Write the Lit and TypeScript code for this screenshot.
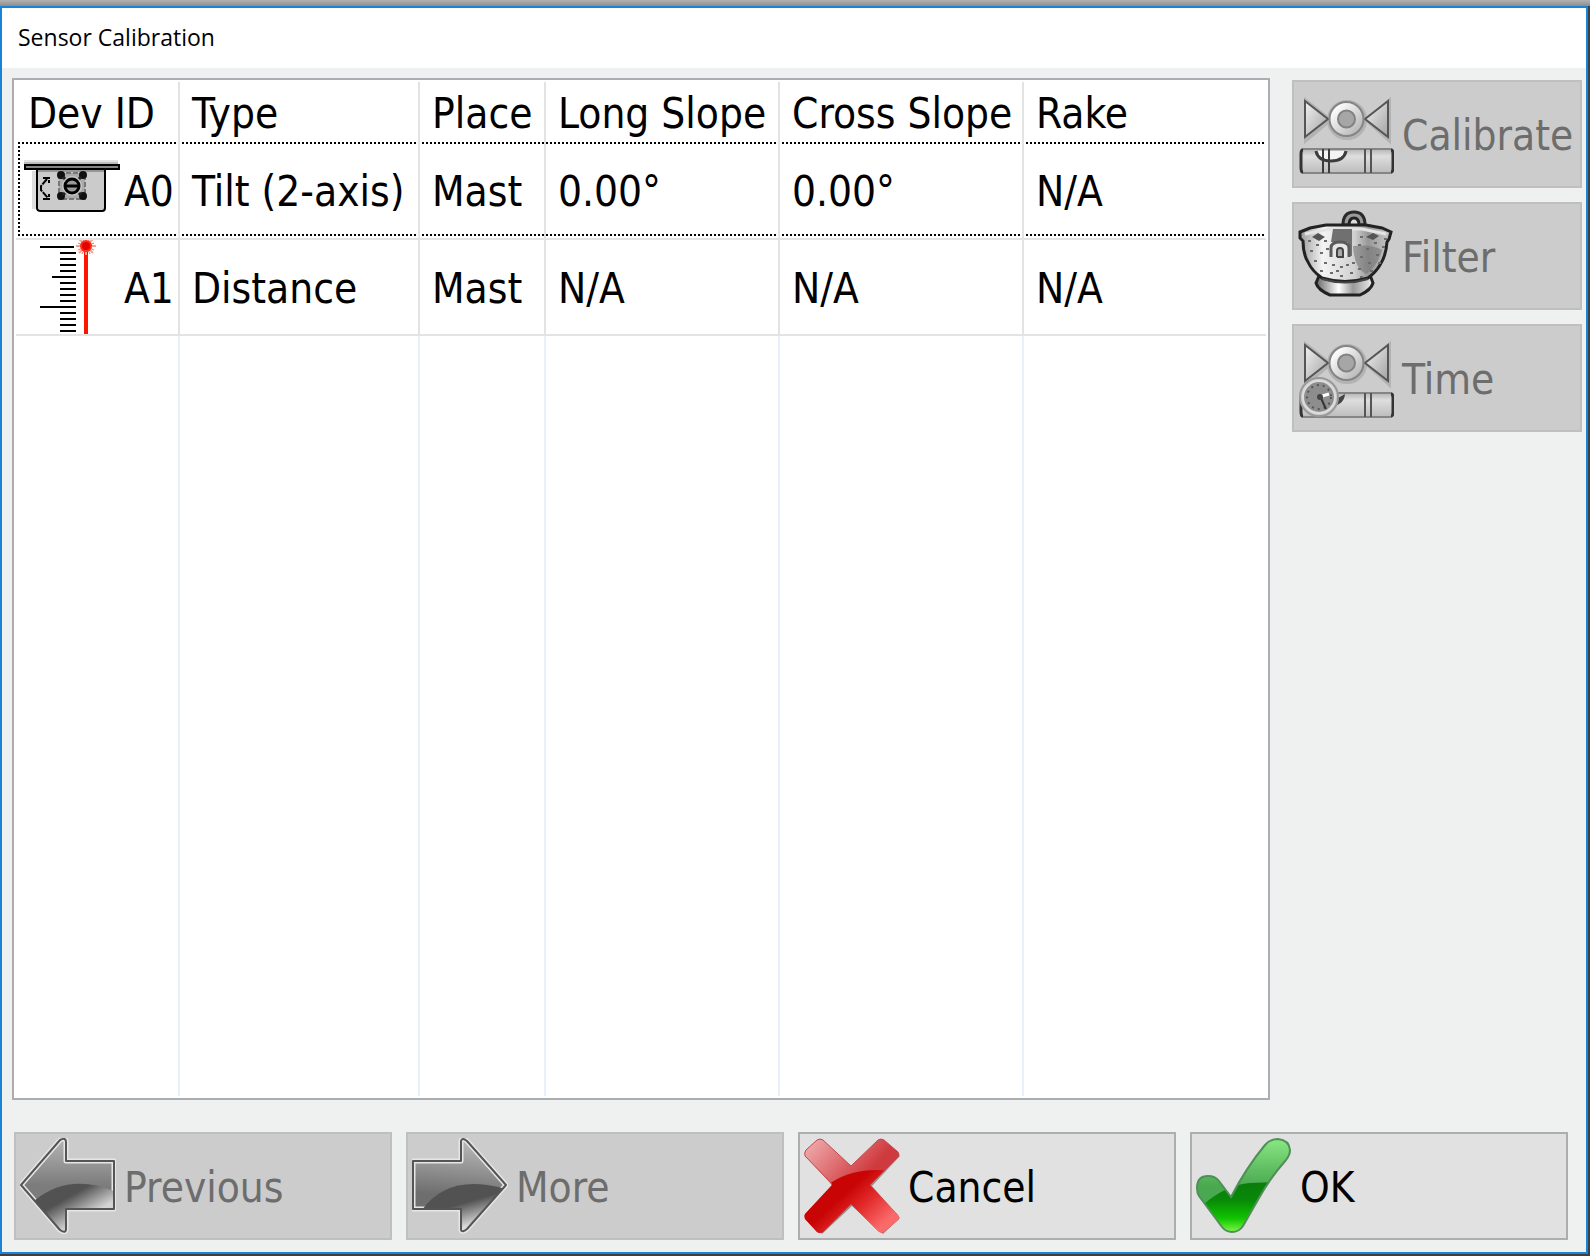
import { LitElement, html, svg, css, nothing } from "lit";
import type { TemplateResult } from "lit";
import { customElement, property } from "lit/decorators.js";

interface Sensor {
  icon: string;
  id: string;
  cells: string[];
  focused?: boolean;
}

const COLUMNS = ["Dev ID", "Type", "Place", "Long Slope", "Cross Slope", "Rake"];

const SENSORS: Sensor[] = [
  { icon: "tilt", id: "A0", cells: ["Tilt (2-axis)", "Mast", "0.00°", "0.00°", "N/A"], focused: true },
  { icon: "distance", id: "A1", cells: ["Distance", "Mast", "N/A", "N/A", "N/A"] },
];

const ACTIONS = [
  { icon: "calibrate", label: "Calibrate", disabled: true },
  { icon: "filter", label: "Filter", disabled: true },
  { icon: "time", label: "Time", disabled: true },
];

const COMMANDS = [
  { icon: "previous", label: "Previous", disabled: true },
  { icon: "more", label: "More", disabled: true },
  { icon: "cancel", label: "Cancel", disabled: false },
  { icon: "ok", label: "OK", disabled: false },
];

// Black scale ticks: [left edge, top edge]; every tick ends at x = 52.
const TICKS: [number, number][] = [
  [16, 6], [36, 12], [36, 18], [36, 24], [36, 30], [28, 36], [36, 42], [36, 48],
  [36, 54], [36, 60], [16, 66], [36, 72], [36, 78], [36, 84], [36, 90],
];

const valve = svg`
  <defs>
    <linearGradient id="tri" x1="0" y1="0" x2="1" y2="1">
      <stop offset="0" stop-color="#f2f2f2"/><stop offset="1" stop-color="#a2a2a2"/>
    </linearGradient>
    <linearGradient id="ring" x1="0" y1="0" x2="1" y2="1">
      <stop offset="0.15" stop-color="#ffffff"/><stop offset="0.9" stop-color="#b4b4b4"/>
    </linearGradient>
    <linearGradient id="tube" x1="0" y1="0" x2="0" y2="1">
      <stop offset="0" stop-color="#b5b5b5"/><stop offset="0.3" stop-color="#dedede"/><stop offset="1" stop-color="#bcbcbc"/>
    </linearGradient>
  </defs>
  <g fill="none" stroke="#9c9c9c" stroke-width="4" opacity="0.5">
    <path d="M8 15V54L32 34Z"/><path d="M91 15V54L69 34Z"/><circle cx="49" cy="34" r="18"/>
  </g>
  <path d="M7 15V51L30 33Z" fill="url(#tri)" stroke="#555" stroke-width="2"/>
  <path d="M90 15V51L67 33Z" fill="url(#tri)" stroke="#555" stroke-width="2"/>
  <circle cx="48.500" cy="33" r="17" fill="url(#ring)" stroke="#858585" stroke-width="2"/>
  <circle cx="48.500" cy="33" r="8.500" fill="#a6a6a6" stroke="#828282" stroke-width="2"/>
  <rect x="3" y="63" width="92" height="24" rx="3" fill="url(#tube)" stroke="#858585" stroke-width="2"/>
  <path d="M5 64Q3 64 3 68V82Q3 86 5 86M93 64Q95 64 95 68V82Q95 86 93 86" fill="none" stroke="#333" stroke-width="3"/>
  <path d="M67 63V87M73 63V87" stroke="#555" stroke-width="2"/>`;

// Scattered perforations of the colander.
const HOLES: [number, number][] = [
  [10, 32], [18, 36], [26, 32], [12, 42], [22, 44], [16, 52], [26, 54], [34, 56], [22, 62], [32, 64],
  [42, 58], [42, 67], [52, 64], [54, 54], [60, 60], [62, 48], [70, 54], [68, 40], [78, 46], [76, 34],
  [84, 38], [60, 36], [62, 68], [72, 62], [86, 30], [62, 28], [80, 54], [28, 40], [38, 62], [48, 56],
];

const ICONS: Record<string, TemplateResult> = {
  tilt: svg`
    <rect x="0" y="18" width="94" height="2" fill="#e2e2e2"/>
    <rect x="0" y="20" width="94" height="2" fill="#bdbdbd"/>
    <rect x="8" y="29" width="4" height="38" fill="#dedede"/>
    <path d="M13 27V66Q13 69 17 69H78Q81 69 81 66V27Z" fill="#cbcbcb" stroke="#000" stroke-width="2"/>
    <rect x="14" y="28" width="66" height="2" fill="#969696"/>
    <rect x="1" y="23" width="94" height="4" fill="#858585" stroke="#000" stroke-width="2"/>
    <path d="M23 37L17 44V48L24 56M19 36H25V41M19 57H25V52" fill="none" stroke="#000" stroke-width="2" stroke-dasharray="7 1"/>
    <rect x="35" y="31" width="26" height="26" fill="#aaa" stroke="#777" stroke-width="2" stroke-dasharray="5 2"/>
    <g fill="#111"><circle cx="37" cy="33" r="4"/><circle cx="59" cy="33" r="4"/><circle cx="37" cy="54" r="4"/><circle cx="59" cy="54" r="4"/></g>
    <path d="M39 35L42 38M57 35L54 38M39 53L42 50M57 53L54 50" stroke="#222" stroke-width="3"/>
    <circle cx="48" cy="44" r="10" fill="#c6c6c6"/>
    <circle cx="48" cy="44" r="7" fill="#999" stroke="#000" stroke-width="3"/>
    <path d="M42 44H54" stroke="#000" stroke-width="3"/>`,
  distance: svg`
    ${TICKS.map(([x, y]) => svg`<rect x=${x} y=${y} width=${(y === 6 ? 50 : 52) - x} height="2" fill="#000"/>`)}
    <rect x="60" y="8" width="4" height="86" fill="#ff1400"/>
    <path d="M62 -3V15M52 6H72M55 -1L69 13M69 -1L55 13" stroke="#f8a48c" stroke-width="2"/>
    <path d="M58 -2L66 14M66 -2L58 14M54 3L70 10M70 3L54 10" stroke="#f4765a" stroke-width="1"/>
    <circle cx="62" cy="6" r="6" fill="#f5301c"/>
    <circle cx="62" cy="6" r="4" fill="#e60000"/>`,
  calibrate: svg`
    ${valve}
    <path d="M18 65Q20 75 33 75Q46 75 48 65Z" fill="#f4f4f4"/>
    <path d="M18 65Q20 75 33 75Q46 75 48 65" fill="none" stroke="#3c3c3c" stroke-width="3"/>
    <path d="M25 63V87M31 63V87" stroke="#3c3c3c" stroke-width="2"/>`,
  time: svg`
    ${valve}
    <path d="M34 76Q46 75 47 64L40 68Z" fill="#444"/>
    <circle cx="21" cy="67" r="19" fill="#cfcfcf" stroke="#999" stroke-width="2"/>
    <circle cx="21" cy="67" r="16" fill="#8d8d8d" stroke="#ddd" stroke-width="2"/>
    <circle cx="21" cy="67" r="12" fill="none" stroke="#555" stroke-width="2" stroke-dasharray="2 4"/>
    <path d="M21 67L31 64" stroke="#fff" stroke-width="3"/>
    <path d="M22 66L28 79" stroke="#333" stroke-width="2"/>
    <circle cx="22" cy="67" r="3" fill="#444"/>`,
  filter: svg`
    <defs>
      <linearGradient id="bowl" x1="0" y1="0" x2="1" y2="0">
        <stop offset="0" stop-color="#9a9a9a"/><stop offset="0.25" stop-color="#f4f4f4"/>
        <stop offset="0.6" stop-color="#d0d0d0"/><stop offset="0.75" stop-color="#979797"/><stop offset="1" stop-color="#cccccc"/>
      </linearGradient>
      <linearGradient id="foot" x1="0" y1="0" x2="1" y2="0">
        <stop offset="0" stop-color="#666"/><stop offset="0.4" stop-color="#fff"/><stop offset="0.65" stop-color="#999"/><stop offset="1" stop-color="#eee"/>
      </linearGradient>
    </defs>
    <path d="M45 17Q45 4 56 4Q67 4 67 17Z" fill="#9a9a9a" stroke="#2a2a2a" stroke-width="3"/>
    <path d="M51 17Q51 10 56 10Q61 10 61 17" fill="#ddd" stroke="#222" stroke-width="3"/>
    <path d="M21 68L18 75Q20 82 32 87H62Q73 82 75 75L72 67Z" fill="url(#foot)" stroke="#222" stroke-width="3"/>
    <path d="M2 24L12 20L28 17H68L84 20L93 24L91 31L89 34Q88 48 82 57Q78 64 70 70Q47 77 24 70Q14 63 10 54Q5 46 5 33L2 30Z" fill="url(#bowl)" stroke="#222" stroke-width="3"/>
    <path d="M7 26L32 21H64L88 26" fill="none" stroke="#e4e4e4" stroke-width="3"/>
    <path d="M14 29L20 25L27 29L21 33ZM68 29L75 25L81 28L75 32Z" fill="#555"/>
    <path d="M55 38Q74 36 84 42Q80 58 68 66Q56 60 55 38Z" fill="#777" opacity="0.6"/>
    <path d="M35 21H54V48H50V34H33Z" fill="#707070"/>
    <g fill="#6c6c6c">${HOLES.map(([x, y]) => svg`<rect x=${x} y=${y} width="3" height="2"/>`)}</g>
    <path d="M33 49V40Q33 34 42 34Q51 34 51 40V49" fill="#e6e6e6" stroke="#5a5a5a" stroke-width="3"/>
    <path d="M39 49V43Q39 40 42 40Q45 40 45 43V49H39" fill="#aaa" stroke="#444" stroke-width="2"/>
    <path d="M24 71Q47 78 70 71" fill="none" stroke="#444" stroke-width="2"/>`,
  previous: svg`
    <defs>
      <linearGradient id="pa" x1="0" y1="0" x2="0" y2="1">
        <stop offset="0" stop-color="#b4b4b4"/><stop offset="0.5" stop-color="#7c7c7c"/>
      </linearGradient>
      <linearGradient id="pb" gradientUnits="userSpaceOnUse" x1="40" y1="50" x2="60" y2="85">
        <stop offset="0.3" stop-color="#525252"/><stop offset="0.95" stop-color="#d4d4d4"/>
      </linearGradient>
      <clipPath id="pc"><path d="M1 47L40 2Q46 -1 46 4V23H94V71H46V91Q46 96 40 92Z"/></clipPath>
    </defs>
    <path d="M1 47L40 2Q46 -1 46 4V23H94V71H46V91Q46 96 40 92Z" fill="url(#pa)" stroke="#e6e6e6" stroke-width="5" stroke-linejoin="round"/>
    <path d="M15 62Q50 34 96 54V96H15Z" fill="url(#pb)" clip-path="url(#pc)"/>
    <path d="M1 47L40 2Q46 -1 46 4V23H94V71H46V91Q46 96 40 92Z" fill="none" stroke="#555" stroke-width="2" stroke-linejoin="round"/>`,
  more: svg`
    <defs>
      <linearGradient id="ma" x1="0.300" y1="0" x2="0.200" y2="1">
        <stop offset="0" stop-color="#b8b8b8"/><stop offset="0.6" stop-color="#6e6e6e"/>
      </linearGradient>
      <linearGradient id="mb" gradientUnits="userSpaceOnUse" x1="40" y1="50" x2="52" y2="92">
        <stop offset="0.4" stop-color="#525252"/><stop offset="0.95" stop-color="#dddddd"/>
      </linearGradient>
      <clipPath id="mc"><path d="M1 23H49V3Q50 -1 55 3L94 47L55 91Q50 95 49 92V71H1Z"/></clipPath>
    </defs>
    <path d="M1 23H49V3Q50 -1 55 3L94 47L55 91Q50 95 49 92V71H1Z" fill="url(#ma)" stroke="#e6e6e6" stroke-width="5" stroke-linejoin="round"/>
    <path d="M10 72Q36 36 90 50V96H10Z" fill="url(#mb)" clip-path="url(#mc)"/>
    <path d="M1 23H49V3Q50 -1 55 3L94 47L55 91Q50 95 49 92V71H1Z" fill="none" stroke="#555" stroke-width="2" stroke-linejoin="round"/>`,
  cancel: svg`
    <defs>
      <linearGradient id="xa" x1="0" y1="0" x2="0.550" y2="0.500">
        <stop offset="0" stop-color="#f3b4b6"/><stop offset="1" stop-color="#cf3a3e"/>
      </linearGradient>
      <linearGradient id="xb" x1="0.200" y1="0.400" x2="0.900" y2="0.900">
        <stop offset="0.200" stop-color="#c80404"/><stop offset="0.5" stop-color="#e22a2a"/><stop offset="0.9" stop-color="#fb6a6a"/>
      </linearGradient>
      <clipPath id="xc"><path d="M2 12L13 2Q16 0 19 2L47 28L74 2Q77 0 80 2L94 14Q96 17 94 19L66 47L94 77Q96 80 94 82L80 94Q77 96 74 93L47 66L19 94Q16 96 13 94L1 81Q0 78 1 76L28 47L1 18Q0 15 2 12Z"/></clipPath>
    </defs>
    <path d="M4 14L14 4L47 31L78 4L96 18L68 48L96 80L79 96L48 68L18 96L4 81L30 48Z" fill="#8f8f8f"/>
    <g clip-path="url(#xc)">
      <rect width="96" height="96" fill="url(#xa)"/>
      <path d="M-2 70L28 44Q48 31 77 32L96 34V96H-2Z" fill="url(#xb)"/>
    </g>
    <path d="M28 46L1 18Q0 15 2 12L13 2Q16 0 19 2L47 28L74 2Q77 0 80 2L94 14Q96 17 94 19L77 36" fill="none" stroke="#c24850" stroke-width="1"/>`,
  ok: svg`
    <defs>
      <linearGradient id="ka" x1="0" y1="0" x2="0" y2="1">
        <stop offset="0" stop-color="#8ae884"/><stop offset="0.5" stop-color="#4aa850"/>
      </linearGradient>
      <linearGradient id="kb" x1="0" y1="0" x2="0" y2="1">
        <stop offset="0" stop-color="#0a7c0a"/><stop offset="0.35" stop-color="#088a08"/><stop offset="0.7" stop-color="#10c400"/><stop offset="1" stop-color="#8dff50"/>
      </linearGradient>
      <clipPath id="kc"><path d="M1 50Q1 38 12 38Q19 38 23 43L35 59Q50 30 69 7Q74 1 82 1Q93 2 94 12Q94 17 90 22Q74 40 63 60L47 88Q43 94 36 94Q30 94 26 89L3 58Q1 55 1 50Z"/></clipPath>
    </defs>
    <g clip-path="url(#kc)">
      <rect width="96" height="96" fill="url(#ka)"/>
      <path d="M8 66Q30 47 54 45L80 44V96H8Z" fill="url(#kb)"/>
    </g>
    <path d="M1 50Q1 38 12 38Q19 38 23 43L35 59Q50 30 69 7Q74 1 82 1Q93 2 94 12Q94 17 90 22Q74 40 63 60L47 88Q43 94 36 94Q30 94 26 89L3 58Q1 55 1 50Z" fill="none" stroke="#4f8f58" stroke-width="2"/>`,
};

function icon(name: string, height = 96) {
  return html`<svg class="icon" width="96" height=${height} viewBox="0 0 96 ${height}" aria-hidden="true">${ICONS[name]}</svg>`;
}

@customElement("command-button")
export class CommandButton extends LitElement {
  @property() icon = "";
  @property() label = "";
  @property({ type: Boolean }) disabled = false;

  static styles = css`
    :host {
      display: block;
    }
    .button {
      display: flex;
      align-items: center;
      gap: 8px;
      box-sizing: border-box;
      width: 100%;
      height: 108px;
      margin: 0;
      padding: 4px;
      border: 2px solid #adadad;
      background: #e1e1e1;
      color: #000;
      font: inherit;
      text-align: left;
      white-space: nowrap;
    }
    .button:disabled {
      border-color: #bfbfbf;
      background: #cccccc;
      color: #6d6d6d;
    }
    .icon {
      flex: none;
      display: block;
    }
    .label {
      padding-top: 4px;
    }
  `;

  render() {
    return html`<button class="button" type="button" ?disabled=${this.disabled}>
      ${icon(this.icon)}<span class="label">${this.label}</span>
    </button>`;
  }
}

@customElement("sensor-list")
export class SensorList extends LitElement {
  static styles = css`
    :host {
      display: block;
      box-sizing: border-box;
      padding: 2px;
      border: 2px solid #abadb3;
      background: #fff;
    }
    .table {
      width: 100%;
      height: 100%;
      table-layout: fixed;
      border-collapse: separate;
      border-spacing: 0;
    }
    .c0 { width: 164px; }
    .c1 { width: 240px; }
    .c2 { width: 126px; }
    .c3 { width: 234px; }
    .c4 { width: 244px; }
    th,
    td {
      box-sizing: border-box;
      padding: 4px 0 0 12px;
      border-right: 2px solid #e3e3e3;
      font-weight: normal;
      text-align: left;
      white-space: nowrap;
    }
    th:last-child,
    td:last-child {
      border-right: none;
    }
    th {
      height: 60px;
    }
    .row {
      height: 96px;
    }
    .row td {
      border-bottom: 2px solid #e3e3e3;
    }
    .row .device {
      padding: 0 0 0 8px;
    }
    .device-box {
      display: flex;
      align-items: center;
      gap: 4px;
    }
    .icon {
      flex: none;
      display: block;
    }
    .label {
      padding-top: 4px;
    }
    .focused {
      height: 98px;
      background:
        repeating-linear-gradient(90deg, transparent 0 2px, #000 2px 4px) left top / 100% 2px no-repeat,
        repeating-linear-gradient(90deg, transparent 0 2px, #000 2px 4px) left bottom 4px / 100% 2px no-repeat,
        repeating-linear-gradient(#000 0 2px, transparent 2px 4px) left 2px top / 2px 94px no-repeat;
    }
    .rest td {
      border-right-color: #e8f1fb;
    }
  `;

  render() {
    return html`<table class="table" aria-label="Sensors">
      <colgroup>${COLUMNS.map((_, i) => html`<col class="c${i}" />`)}</colgroup>
      <thead>
        <tr>${COLUMNS.map((c) => html`<th scope="col">${c}</th>`)}</tr>
      </thead>
      <tbody>
        ${SENSORS.map(
          (s) => html`<tr class="row ${s.focused ? "focused" : ""}">
            <td class="device">
              <div class="device-box">${icon(s.icon, s.focused ? 96 : 94)}<span class="label">${s.id}</span></div>
            </td>
            ${s.cells.map((c) => html`<td>${c}</td>`)}
          </tr>`
        )}
        <tr class="rest" aria-hidden="true">${COLUMNS.map(() => html`<td>${nothing}</td>`)}</tr>
      </tbody>
    </table>`;
  }
}

@customElement("app-root")
export class AppRoot extends LitElement {
  static styles = css`
    :host {
      display: flex;
      box-sizing: border-box;
      min-height: 100vh;
      padding: 6px 2px 2px 0;
      background: linear-gradient(#b2b2b2, #8c8c8c 6px, #3f3f42 6px);
      color: #000;
      font: 42px/52px "DejaVu Sans Condensed", "Noto Sans", sans-serif;
    }
    .window {
      flex: 1;
      display: flex;
      flex-direction: column;
      border: 2px solid #1883d7;
      background: #eff1f1;
    }
    .title {
      margin: 0;
      padding: 13px 16px 15px;
      background: #fff;
      font: 23px/32px "Open Sans", "Noto Sans", sans-serif;
    }
    .content {
      flex: 1;
      display: grid;
      grid-template-columns: 1fr 290px;
      gap: 22px;
      padding: 10px 4px 32px 10px;
    }
    .actions {
      display: flex;
      flex-direction: column;
      gap: 14px;
      padding-top: 2px;
    }
    .commands {
      display: grid;
      grid-template-columns: repeat(4, 1fr);
      gap: 14px;
      padding: 0 18px 12px 12px;
    }
  `;

  private button(b: { icon: string; label: string; disabled: boolean }) {
    return html`<command-button .icon=${b.icon} .label=${b.label} .disabled=${b.disabled}></command-button>`;
  }

  render() {
    return html`<main class="window">
      <h1 class="title">Sensor Calibration</h1>
      <div class="content">
        <sensor-list></sensor-list>
        <div class="actions">${ACTIONS.map((b) => this.button(b))}</div>
      </div>
      <div class="commands">${COMMANDS.map((b) => this.button(b))}</div>
    </main>`;
  }
}
